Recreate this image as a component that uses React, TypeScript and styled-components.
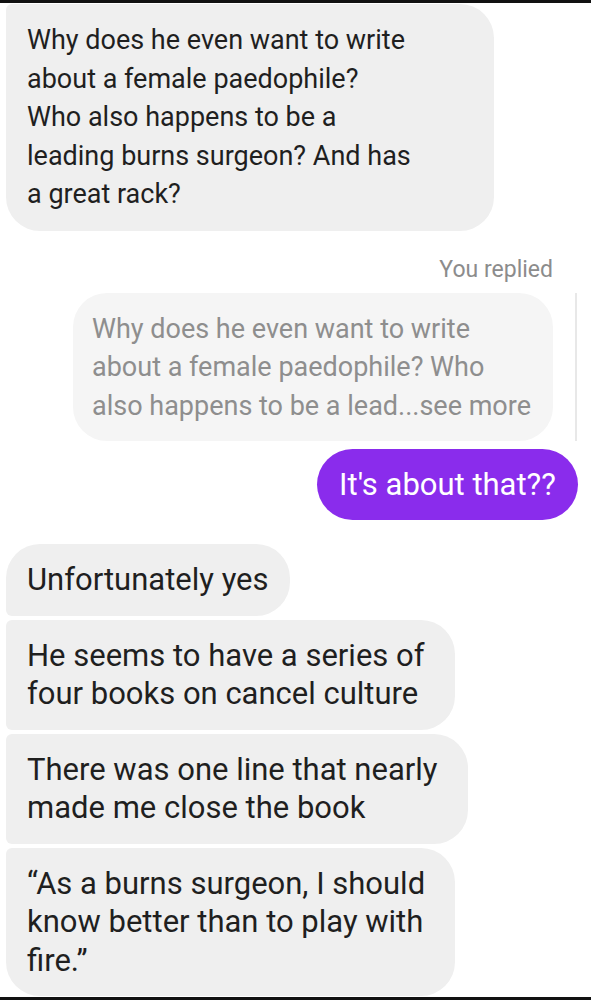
import React, { FC } from "react";
import styled, { createGlobalStyle } from "styled-components";

type Pos = "first" | "middle" | "last" | "single";

interface IMessage {
  lines: string[];
  width: number;
  pos: Pos;
}

const GlobalStyle = createGlobalStyle`
  html, body {
    margin: 0;
    padding: 0;
    background: #ffffff;
  }
  body {
    font-family: Roboto, "Noto Sans", "Liberation Sans", sans-serif;
    -webkit-font-smoothing: antialiased;
  }
`;

const BIG = 34;
const SMALL = 6;

const topLeft = (pos: Pos) => (pos === "first" || pos === "single" ? BIG : SMALL);
const bottomLeft = (pos: Pos) => (pos === "last" || pos === "single" ? BIG : SMALL);

const firstThread: IMessage[] = [
  {
    lines: [
      "Why does he even want to write",
      "about a female paedophile?",
      "Who also happens to be a",
      "leading burns surgeon? And has",
      "a great rack?",
    ],
    width: 488,
    pos: "last",
  },
];

const secondThread: IMessage[] = [
  { lines: ["Unfortunately yes"], width: 284, pos: "first" },
  {
    lines: ["He seems to have a series of", "four books on cancel culture"],
    width: 449,
    pos: "middle",
  },
  {
    lines: ["There was one line that nearly", "made me close the book"],
    width: 462,
    pos: "middle",
  },
  {
    lines: [
      "\u201CAs a burns surgeon, I should",
      "know better than to play with",
      "fire.\u201D",
    ],
    width: 449,
    pos: "last",
  },
];

const quoted = [
  "Why does he even want to write",
  "about a female paedophile? Who",
  "also happens to be a lead...see more",
];

const Lines: FC<{ lines: string[] }> = ({ lines }) => (
  <>
    {lines.map((l, i) => (
      <Line key={i}>{l}</Line>
    ))}
  </>
);

const App: FC = () => {
  return (
    <>
      <GlobalStyle />
      <Page>
        <Group>
          {firstThread.map((m, i) => (
            <Bubble key={i} $w={m.width} $pos={m.pos} $large={false}>
              <Lines lines={m.lines} />
            </Bubble>
          ))}
        </Group>

        <ReplyBlock>
          <ReplyLabel>You replied</ReplyLabel>
          <QuoteRow>
            <Quote>
              <Lines lines={quoted} />
            </Quote>
            <ReplyBar />
          </QuoteRow>
          <Sent>It's about that??</Sent>
        </ReplyBlock>

        <Group>
          {secondThread.map((m, i) => (
            <Bubble key={i} $w={m.width} $pos={m.pos} $large>
              <Lines lines={m.lines} />
            </Bubble>
          ))}
        </Group>
      </Page>
    </>
  );
};

const Page = styled.div`
  box-sizing: border-box;
  width: 591px;
  height: 1000px;
  overflow: hidden;
  border-top: 3px solid #111111;
  border-bottom: 3px solid #111111;
  padding-top: 1px;
  display: flex;
  flex-direction: column;
`;

const Group = styled.div`
  display: flex;
  flex-direction: column;
  align-items: flex-start;
  gap: 4px;
  padding-left: 6px;
`;

// the lower half of the screenshot is shown a little bigger than the upper half
const Bubble = styled.div<{ $w: number; $pos: Pos; $large: boolean }>`
  box-sizing: border-box;
  width: ${({ $w }) => $w}px;
  padding: ${({ $large }) => ($large ? "17px 0 16px 21px" : "17px 0 17px 21px")};
  background: #efefef;
  color: #1f1f1f;
  font-size: ${({ $large }) => ($large ? 31 : 27)}px;
  line-height: 38.5px;
  border-radius: ${({ $pos }) =>
    `${topLeft($pos)}px ${BIG}px ${BIG}px ${bottomLeft($pos)}px`};
`;

const Line = styled.div`
  white-space: nowrap;
`;

const ReplyBlock = styled.div`
  display: flex;
  flex-direction: column;
  padding: 25px 0 24px;
`;

const ReplyLabel = styled.div`
  align-self: flex-end;
  padding-right: 38px;
  color: #8c8c8c;
  font-size: 23px;
  line-height: 28px;
`;

const QuoteRow = styled.div`
  display: flex;
  justify-content: flex-end;
  align-items: stretch;
  gap: 22px;
  padding-right: 14px;
  margin-top: 9px;
`;

const Quote = styled.div`
  box-sizing: border-box;
  width: 480px;
  padding: 17px 0 16px 19px;
  background: #f5f5f5;
  color: #8e8e8e;
  font-size: 27px;
  line-height: 38.5px;
  border-radius: ${BIG}px;
`;

const ReplyBar = styled.div`
  width: 2px;
  background: #e8e8e8;
`;

const Sent = styled.div`
  align-self: flex-end;
  box-sizing: border-box;
  width: 261px;
  margin-top: 8px;
  margin-right: 13px;
  padding: 17px 0 16px;
  text-align: center;
  background: #8a2cec;
  color: #ffffff;
  font-size: 31px;
  line-height: 38px;
  white-space: nowrap;
  border-radius: 36px;
`;

export default App;
